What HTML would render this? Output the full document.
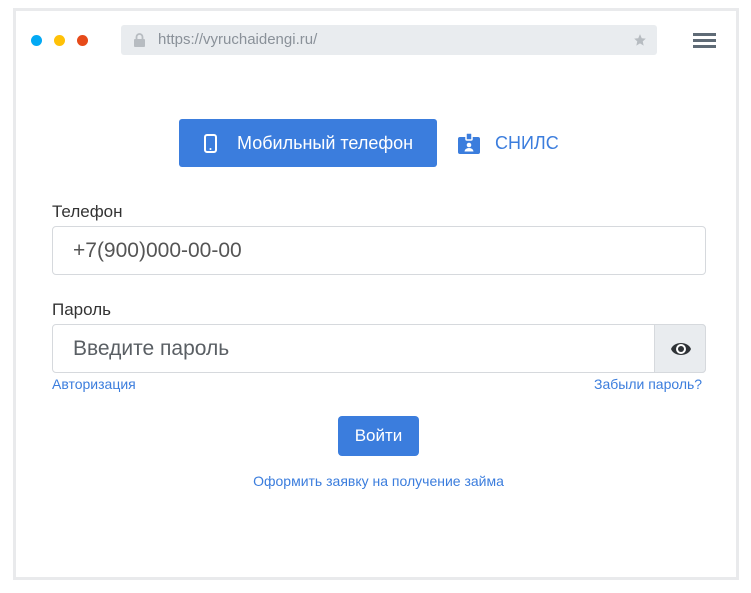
<!DOCTYPE html>
<html><head><meta charset="utf-8"><style>
body{margin:0;width:751px;height:593px;background:#fff;font-family:"Liberation Sans","DejaVu Sans",sans-serif;position:relative;overflow:hidden}
.frame{position:absolute;left:13px;top:8px;width:720px;height:566px;border:3px solid #e9eaec;background:#fff}
.a{position:absolute}
.dot{position:absolute;width:11px;height:11px;border-radius:50%;top:35px}
.url{position:absolute;left:121px;top:25px;width:536px;height:30px;background:#e9ecef;border-radius:3px}
.tab{position:absolute;left:179px;top:119px;width:258px;height:48px;background:#3b7ddd;border-radius:3px;color:#fff;font-size:18px}
.lbl{position:absolute;left:52px;font-size:17px;color:#333}
.inp{position:absolute;left:52px;width:654px;height:49px;border:1px solid #d6d9dd;border-radius:4px;font-size:21px;color:#555;box-sizing:border-box}
.link{position:absolute;font-size:14px;color:#3b7ddd}
</style></head><body>
<div class="frame"></div>
<div class="dot" style="left:31px;background:#03a9f4"></div>
<div class="dot" style="left:54px;background:#ffc107"></div>
<div class="dot" style="left:77px;background:#e64a19"></div>
<div class="url">
<svg class="a" style="left:13px;top:8px" width="11" height="14" viewBox="0 0 11 14"><rect x="0" y="6" width="11" height="8" rx="1" fill="#b7bcc1"/><path d="M2.5 6V4a3 3 0 0 1 6 0v2" stroke="#b7bcc1" stroke-width="1.8" fill="none"/></svg>
<span class="a" style="left:37px;top:6px;font-size:15px;color:#8a9199">https://vyruchaidengi.ru/</span>
<svg class="a" style="left:512px;top:8px" width="14" height="14" viewBox="0 0 24 24"><path d="M12 2l3 7 7 .6-5.3 4.7 1.6 7.4L12 17.8 5.7 21.7l1.6-7.4L2 9.6 9 9z" fill="#b7bcc1"/></svg>
</div>
<div class="a" style="left:693px;top:33px;width:23px;height:3px;background:#5f6b76;box-shadow:0 6px 0 #5f6b76,0 12px 0 #5f6b76"></div>
<div class="tab">
<svg class="a" style="left:25px;top:15px" width="13" height="19" viewBox="0 0 13 19"><rect x="1" y="1" width="11" height="17" rx="2" fill="none" stroke="#fff" stroke-width="2"/><circle cx="6.5" cy="15" r="1" fill="#fff"/></svg>
<span class="a" style="left:58px;top:14px">Мобильный телефон</span>
</div>
<svg class="a" style="left:458px;top:133px" width="22" height="21" viewBox="0 0 22 21"><rect x="0" y="4" width="22" height="17" rx="2" fill="#3b7ddd"/><rect x="8" y="0" width="6" height="7" rx="1" fill="#3b7ddd" stroke="#fff" stroke-width="1.5"/><circle cx="11" cy="12" r="2.3" fill="#fff"/><path d="M6.5 18.5a4.5 3.5 0 0 1 9 0z" fill="#fff"/></svg>
<span class="a" style="left:495px;top:133px;font-size:18px;color:#3b7ddd">СНИЛС</span>
<div class="lbl" style="top:202px">Телефон</div>
<div class="inp" style="top:226px;padding:12px 0 0 20px">+7(900)000-00-00</div>
<div class="lbl" style="top:300px">Пароль</div>
<div class="inp" style="top:324px;padding:12px 0 0 20px;color:#5a5f64">Введите пароль
<div class="a" style="right:-1px;top:-1px;width:52px;height:49px;background:#e9ecef;border:1px solid #d6d9dd;border-radius:0 4px 4px 0;box-sizing:border-box"></div>
<svg class="a" style="left:617px;top:14px" width="22" height="20" viewBox="0 0 22 20"><path d="M1 10C4 2 18 2 21 10C18 18 4 18 1 10Z" fill="#2f3337"/><circle cx="11" cy="10" r="5" fill="#fff"/><circle cx="11" cy="10" r="3" fill="#2f3337"/></svg>
</div>
<div class="link" style="left:52px;top:376px">Авторизация</div>
<div class="link" style="left:594px;top:376px">Забыли пароль?</div>
<div class="a" style="left:338px;top:416px;width:81px;height:40px;background:#3b7ddd;border-radius:4px;color:#fff;font-size:17px;text-align:center;line-height:40px">Войти</div>
<div class="link" style="left:0;width:757px;text-align:center;top:473px">Оформить заявку на получение займа</div>
</body></html>
